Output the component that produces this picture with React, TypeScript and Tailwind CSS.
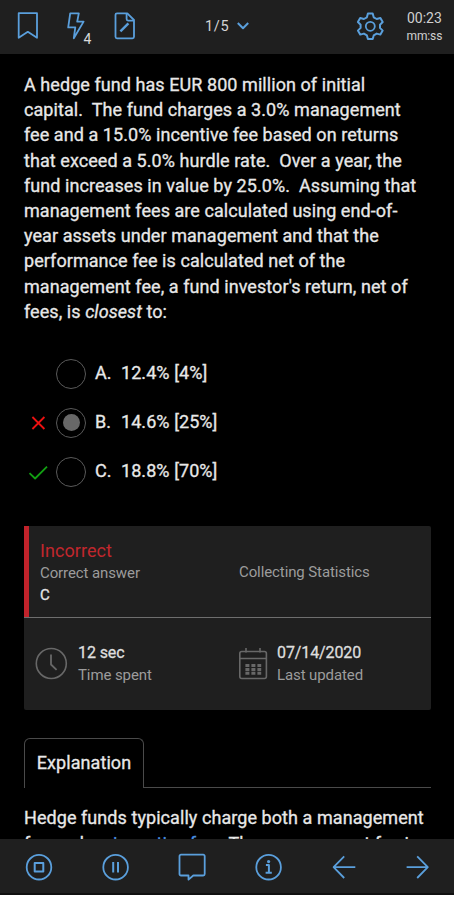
import type { ReactNode } from 'react';

interface Answer {
  letter: string;
  text: string;
  selected?: boolean;
  mark?: 'wrong' | 'right';
}

const questionLines: ReactNode[] = [
  'A hedge fund has EUR 800 million of initial',
  'capital.  The fund charges a 3.0% management',
  'fee and a 15.0% incentive fee based on returns',
  'that exceed a 5.0% hurdle rate.  Over a year, the',
  'fund increases in value by 25.0%.  Assuming that',
  'management fees are calculated using end-of-',
  'year assets under management and that the',
  'performance fee is calculated net of the',
  "management fee, a fund investor's return, net of",
  <>fees, is <em>closest</em> to:</>,
];

const answers: Answer[] = [
  { letter: 'A', text: '12.4% [4%]' },
  { letter: 'B', text: '14.6% [25%]', selected: true, mark: 'wrong' },
  { letter: 'C', text: '18.8% [70%]', mark: 'right' },
];

function Icon({ children, className = '', size = 28 }: { children: ReactNode; className?: string; size?: number }) {
  return (
    <svg
      width={size}
      height={size}
      viewBox={`0 0 ${size} ${size}`}
      fill="none"
      stroke="currentColor"
      strokeWidth="1.8"
      strokeLinejoin="round"
      className={`shrink-0 overflow-visible ${className}`}
    >
      {children}
    </svg>
  );
}

function TopBar() {
  return (
    <header className="flex h-[54px] shrink-0 items-center bg-[#1f1f1f] pl-[14px] text-[#5a9fdc]">
      <Icon>
        <path d="M4.7 .2H23v24.6L13.8 18.8 4.7 24.8z" />
      </Icon>
      <div className="relative ml-5 h-7 w-7">
        <Icon>
          <path d="M8.2 .3h8.6l-1.6 8.3h6.4L11.8 25.2l1.5-10.8H6.2z" />
        </Icon>
        <span className="absolute top-[18px] left-[21.5px] text-[14px] leading-4 text-[#dadada]">4</span>
      </div>
      <Icon className="ml-5">
        <path d="M7 .3h10.3l6.7 6.7v16.8a1.5 1.5 0 0 1-1.5 1.5H7a1.5 1.5 0 0 1-1.5-1.5v-22A1.5 1.5 0 0 1 7 .3z" />
        <path d="M16.6.5v5.6a1.5 1.5 0 0 0 1.5 1.5h5.6" />
        <path d="M10.4 18.4l8-8" strokeWidth="2.4" />
      </Icon>
      <div className="ml-[67px] flex items-center text-[14.5px] tracking-[0.7px] text-[#d4d4d4]">
        1/5
        <Icon size={14} className="ml-[7px] text-[#5a9fdc]">
          <path d="M1.8 3l5.2 5.2L12.2 3" strokeWidth="2" />
        </Icon>
      </div>
      <Icon className="ml-[106px]">
        <path
          d="M11.9 .6h4.8l1 3.7 3 1.7 3.7-1 2.3 4-2.7 2.7v3.2l2.7 2.7-2.3 4-3.7-1-3 1.8-1 3.6h-4.8l-1-3.6-3-1.8-3.7 1-2.3-4 2.7-2.7v-3.2L1.9 9l2.3-4 3.7 1 3-1.7z"
          strokeWidth="2"
        />
        <circle cx="14.3" cy="13.3" r="4.5" />
      </Icon>
      <div className="ml-[22px] w-[36px] whitespace-nowrap text-center text-[#cfcfcf]">
        <div className="text-[14px] leading-[17px]">00:23</div>
        <div className="text-[12px] leading-[18px] tracking-[-0.1px]">mm:ss</div>
      </div>
    </header>
  );
}

function AnswerRow({ answer }: { answer: Answer }) {
  return (
    <div className="flex h-[49.2px] items-center">
      <div className="flex w-[32px] pl-[4px]">
        {answer.mark === 'wrong' && (
          <Icon size={20} className="text-[#ee1111]">
            <path d="M4.4 4l12 12M16.4 4l-12 12" />
          </Icon>
        )}
        {answer.mark === 'right' && (
          <Icon size={20} className="text-[#12a012]">
            <path d="M1.5 11.2l5.6 5.3L19 4.6" />
          </Icon>
        )}
      </div>
      <div className="flex h-[30px] w-[30px] items-center justify-center rounded-full border-[1.5px] border-[#5a5a5a]">
        {answer.selected && <div className="h-[17px] w-[17px] rounded-full bg-[#686868]" />}
      </div>
      <div className="ml-[9px] w-[26px] pb-[3px]">{answer.letter}.</div>
      <div className="pb-[3px]">{answer.text}</div>
    </div>
  );
}

function ResultCard() {
  return (
    <section className="mt-[29px] h-[184px] w-[407px] rounded-[2px] bg-[#1f1f1f] text-[15px] leading-[22px] tracking-[-0.1px] text-[#9c9c9c] [-webkit-text-stroke:0px]">
      <div className="flex h-[92px] border-b border-[#6e6e6e]">
        <div className="w-[5px] bg-[#c1232b]" />
        <div className="w-[210px] pt-[14px] pl-[11px]">
          <div className="text-[18px] tracking-[0.06px] text-[#c1272d]">Incorrect</div>
          <div>Correct answer</div>
          <div className="text-[#e6e6e6] [-webkit-text-stroke:0.3px]">C</div>
        </div>
        <div className="pt-[35px]">Collecting Statistics</div>
      </div>
      <div className="flex h-[92px] items-center">
        <Icon size={32} className="ml-[11px] text-[#686868]">
          <circle cx="16.3" cy="15.5" r="15" strokeWidth="1.6" />
          <path d="M16 6.5v10l5.6 5.3" strokeWidth="1.8" />
        </Icon>
        <div className="ml-[11px] w-[161px]">
          <div className="text-[16px] text-[#dedede] [-webkit-text-stroke:0.3px]">12 sec</div>
          <div>Time spent</div>
        </div>
        <Icon size={32} className="text-[#686868]">
          <rect x="0.8" y="3.5" width="26.6" height="27" rx="2" strokeWidth="1.6" />
          <path d="M.8 10.5h26.6M7 0v4.5M21 0v4.5" strokeWidth="1.6" />
          <path d="M6.4 17.5h15.8M6.4 21.4h15.8M6.4 25.3h15.8" strokeWidth="3" strokeDasharray="4 2" />
        </Icon>
        <div className="ml-[6px]">
          <div className="text-[16px] text-[#dedede] [-webkit-text-stroke:0.3px]">07/14/2020</div>
          <div>Last updated</div>
        </div>
      </div>
    </section>
  );
}

function BottomBar() {
  return (
    <footer className="flex h-[56px] shrink-0 items-center justify-between border-b-2 border-[#101010] bg-[#1f1f1f] pr-[22px] pl-[25px] text-[#5a9fdc]">
      <Icon>
        <circle cx="14" cy="15.2" r="12.3" />
        <path d="M9.7 10.9h8.6v8.6H9.7z" strokeWidth="2" />
      </Icon>
      <Icon>
        <circle cx="14.6" cy="15.2" r="12.3" />
        <path d="M12.2 10v10.4M17 10v10.4" strokeWidth="2" />
      </Icon>
      <Icon>
        <path d="M4 2.7h22.2a1.5 1.5 0 0 1 1.5 1.5V22a1.5 1.5 0 0 1-1.5 1.5h-9.9L11.5 27.6v-4.1H4A1.5 1.5 0 0 1 2.5 22V4.2A1.5 1.5 0 0 1 4 2.7z" />
      </Icon>
      <Icon>
        <circle cx="16.6" cy="15.2" r="12.3" />
        <path d="M13.9 13.1h3v7.6M13.6 20.7h6.2" strokeWidth="2" />
        <circle cx="16.6" cy="9.6" r="1.6" fill="currentColor" stroke="none" />
      </Icon>
      <Icon>
        <path d="M27.3 15.2H5.8M16.2 4.4L5.6 15.2 16.2 26" />
      </Icon>
      <Icon>
        <path d="M2.6 15.2h21M13.2 4.4l10.6 10.8L13.2 26" />
      </Icon>
    </footer>
  );
}

export default function App() {
  return (
    <div className="flex h-[900px] w-[454px] flex-col overflow-hidden bg-white font-['Roboto',sans-serif]">
      <TopBar />
      <main className="min-h-0 flex-1 overflow-hidden bg-black pt-[18px] pl-[24px] text-[18px] leading-[25.2px] tracking-[0.065px] text-[#e8e8e8] [-webkit-text-stroke:0.3px]">
        <div className="whitespace-pre">
          {questionLines.map((line, i) => (
            <div key={i}>{line}</div>
          ))}
        </div>
        <div className="mt-[25px]">
          {answers.map((answer) => (
            <AnswerRow key={answer.letter} answer={answer} />
          ))}
        </div>
        <ResultCard />
        {/* Tabs */}
        <div className="mt-[28px] flex w-[407px]">
          <div className="flex h-[50px] w-[120px] items-center justify-center rounded-t-[6px] border border-b-0 border-[#4a4a4a]">
            Explanation
          </div>
          <div className="flex-1 border-b border-[#4a4a4a]" />
        </div>
        <div className="mt-[17px] whitespace-pre">
          <div>Hedge funds typically charge both a management</div>
          <div className="pt-[1.5px]">
            fee and an <span className="text-[#4a90e2]">incentive fee</span>.  The management fee is
          </div>
        </div>
      </main>
      <BottomBar />
      <div className="h-[5px] shrink-0 bg-white" />
    </div>
  );
}
